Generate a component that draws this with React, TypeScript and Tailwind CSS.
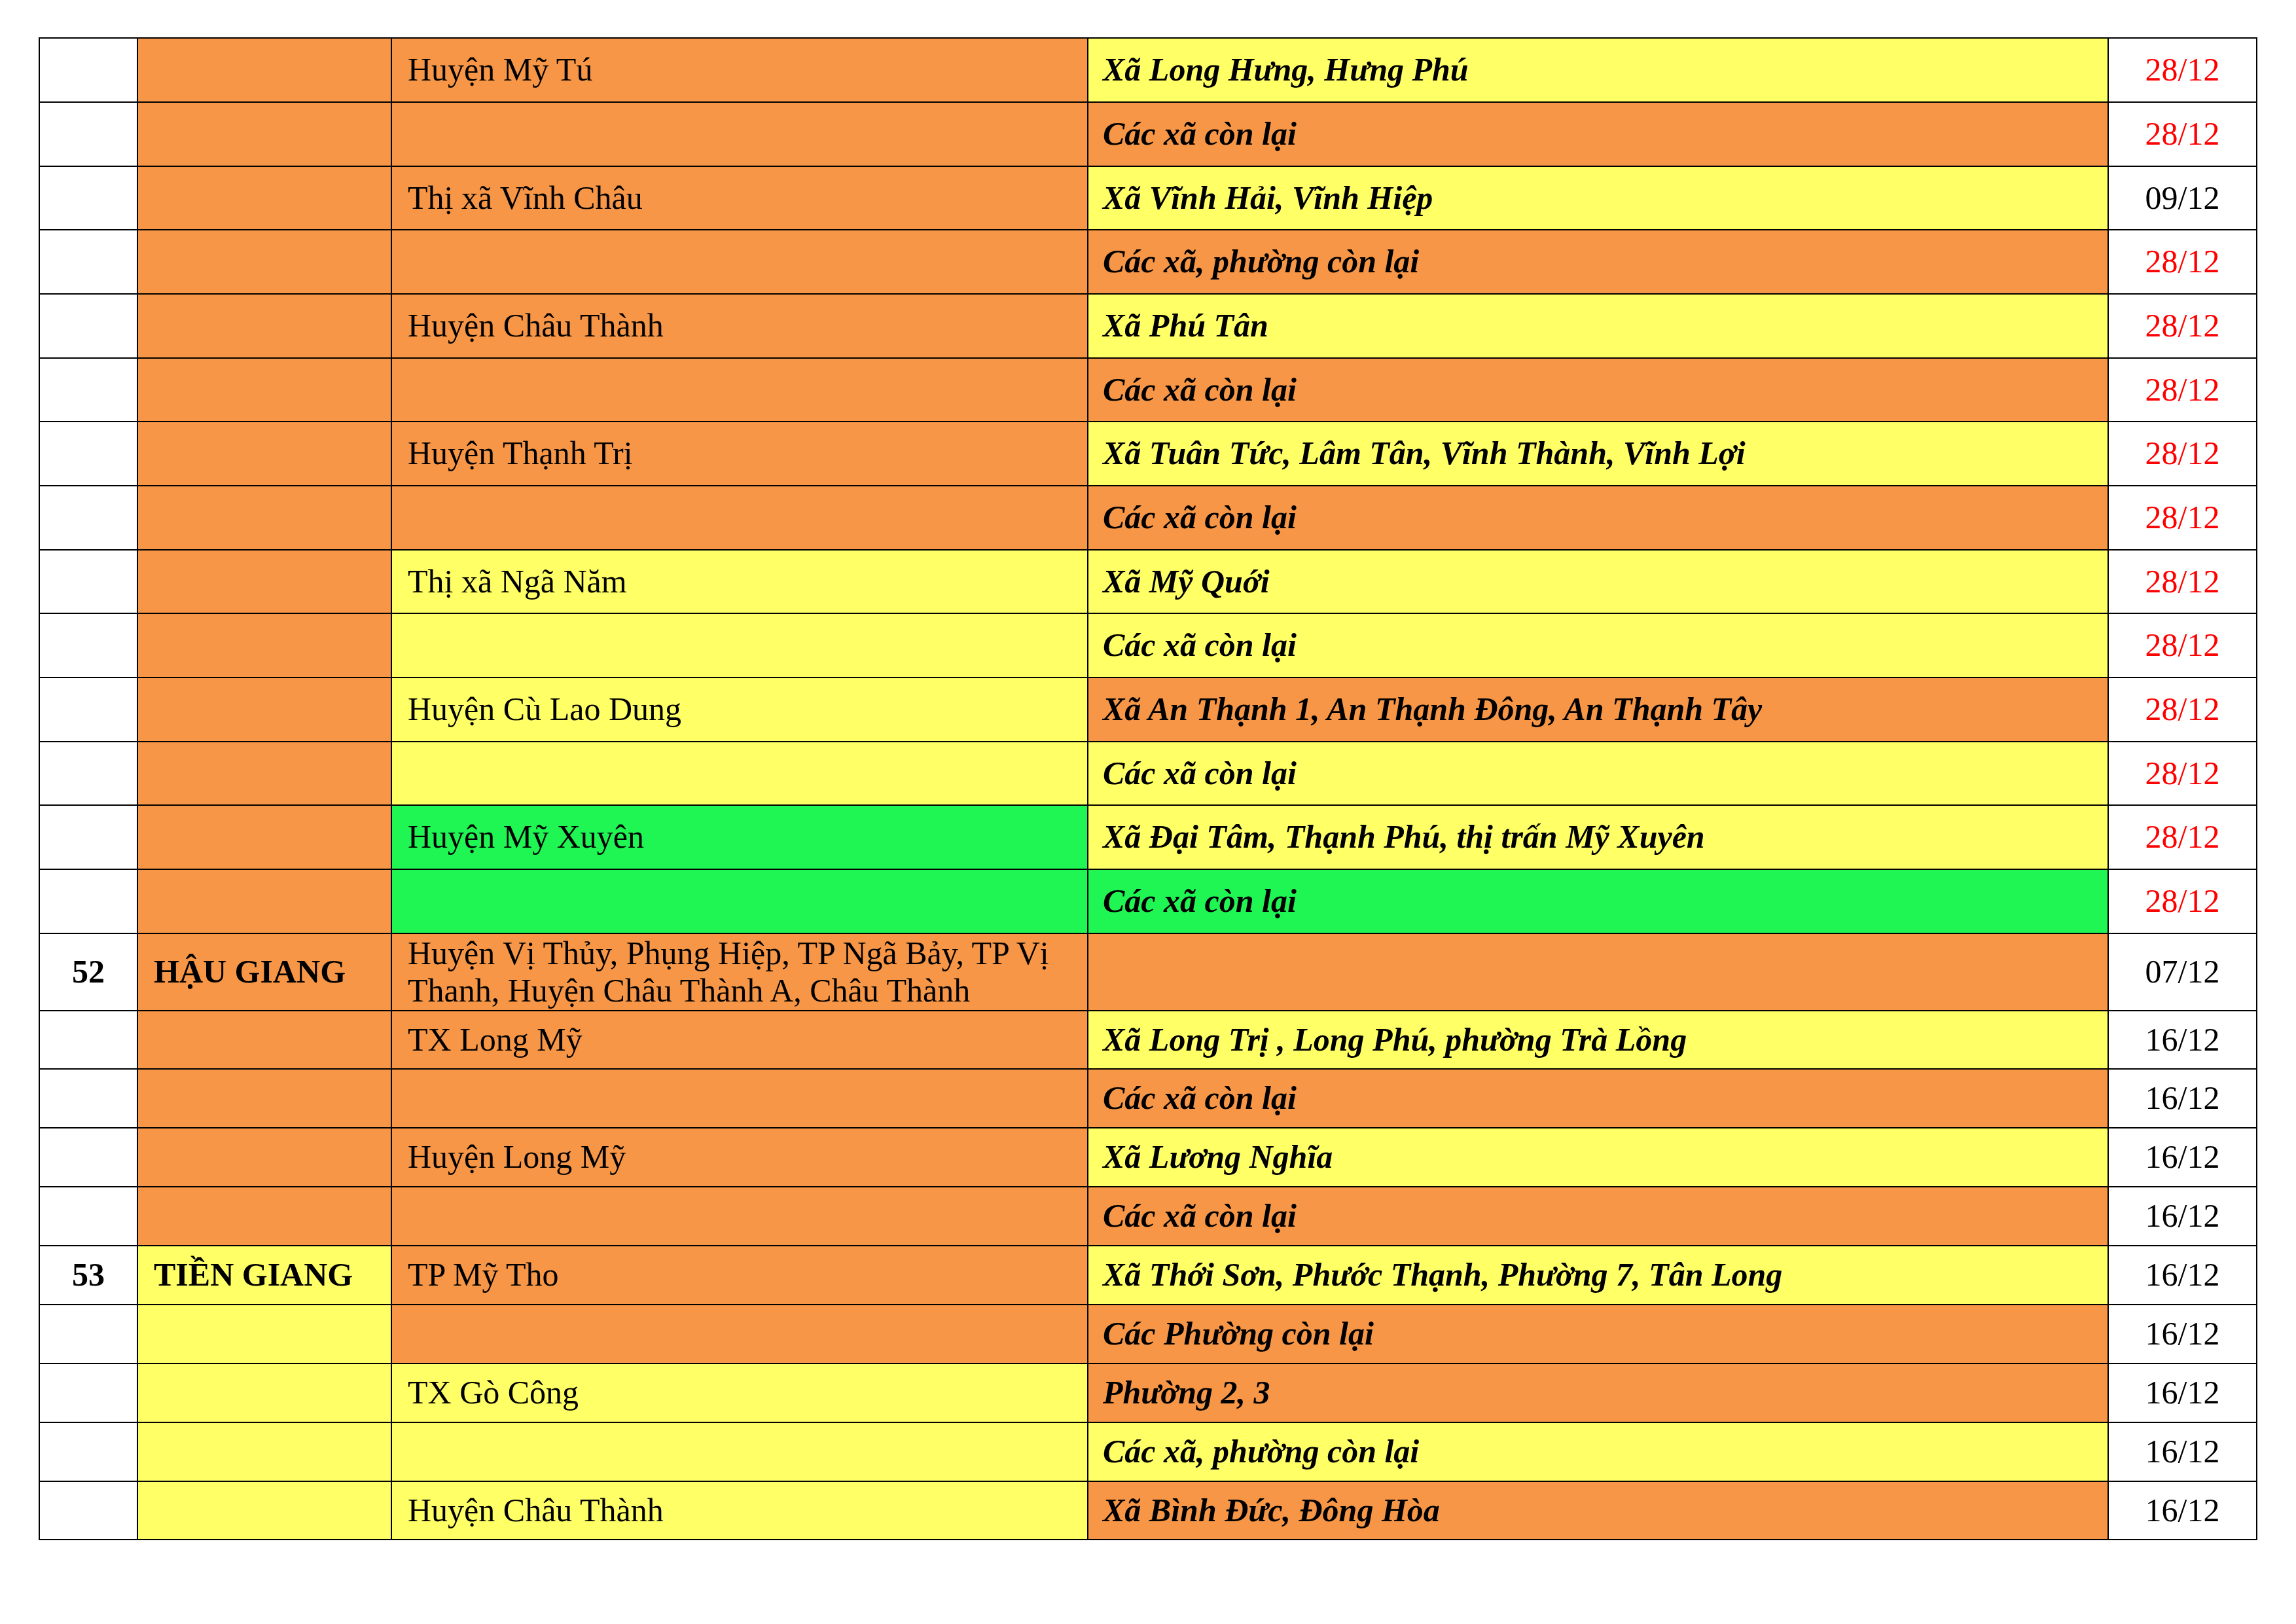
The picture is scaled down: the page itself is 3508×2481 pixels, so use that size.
import React from "react";

type C = "o" | "y" | "g";

const BG: Record<C, string> = {
  o: "bg-[#f79646]",
  y: "bg-[#ffff66]",
  g: "bg-[#1ff553]",
};

type Row = {
  h: string;
  num?: string;
  prov?: string;
  c2: C;
  c3: C;
  c4: C;
  dist?: React.ReactNode;
  comm?: string;
  date: string;
  red?: boolean;
};

const rows: Row[] = [
  { h: "h-[98px]", c2: "o", c3: "o", c4: "y", dist: "Huyện Mỹ Tú", comm: "Xã Long Hưng, Hưng Phú", date: "28/12", red: true },
  { h: "h-[98px]", c2: "o", c3: "o", c4: "o", comm: "Các xã còn lại", date: "28/12", red: true },
  { h: "h-[97px]", c2: "o", c3: "o", c4: "y", dist: "Thị xã Vĩnh Châu", comm: "Xã Vĩnh Hải, Vĩnh Hiệp", date: "09/12" },
  { h: "h-[98px]", c2: "o", c3: "o", c4: "o", comm: "Các xã, phường còn lại", date: "28/12", red: true },
  { h: "h-[98px]", c2: "o", c3: "o", c4: "y", dist: "Huyện Châu Thành", comm: "Xã Phú Tân", date: "28/12", red: true },
  { h: "h-[97px]", c2: "o", c3: "o", c4: "o", comm: "Các xã còn lại", date: "28/12", red: true },
  { h: "h-[98px]", c2: "o", c3: "o", c4: "y", dist: "Huyện Thạnh Trị", comm: "Xã Tuân Tức, Lâm Tân, Vĩnh Thành, Vĩnh Lợi", date: "28/12", red: true },
  { h: "h-[98px]", c2: "o", c3: "o", c4: "o", comm: "Các xã còn lại", date: "28/12", red: true },
  { h: "h-[97px]", c2: "o", c3: "y", c4: "y", dist: "Thị xã Ngã Năm", comm: "Xã Mỹ Quới", date: "28/12", red: true },
  { h: "h-[98px]", c2: "o", c3: "y", c4: "y", comm: "Các xã còn lại", date: "28/12", red: true },
  { h: "h-[98px]", c2: "o", c3: "y", c4: "o", dist: "Huyện Cù Lao Dung", comm: "Xã An Thạnh 1, An Thạnh Đông, An Thạnh Tây", date: "28/12", red: true },
  { h: "h-[97px]", c2: "o", c3: "y", c4: "y", comm: "Các xã còn lại", date: "28/12", red: true },
  { h: "h-[98px]", c2: "o", c3: "g", c4: "y", dist: "Huyện Mỹ Xuyên", comm: "Xã Đại Tâm, Thạnh Phú, thị trấn Mỹ Xuyên", date: "28/12", red: true },
  { h: "h-[98px]", c2: "o", c3: "g", c4: "g", comm: "Các xã còn lại", date: "28/12", red: true },
  {
    h: "h-[118px]",
    num: "52",
    prov: "HẬU GIANG",
    c2: "o",
    c3: "o",
    c4: "o",
    dist: (
      <>
        <span className="block whitespace-nowrap">Huyện Vị Thủy, Phụng Hiệp, TP Ngã Bảy, TP Vị</span>
        <span className="block whitespace-nowrap">Thanh, Huyện Châu Thành A, Châu Thành</span>
      </>
    ),
    date: "07/12",
  },
  { h: "h-[89px]", c2: "o", c3: "o", c4: "y", dist: "TX Long Mỹ", comm: "Xã Long Trị , Long Phú, phường Trà Lồng", date: "16/12" },
  { h: "h-[90px]", c2: "o", c3: "o", c4: "o", comm: "Các xã còn lại", date: "16/12" },
  { h: "h-[90px]", c2: "o", c3: "o", c4: "y", dist: "Huyện Long Mỹ", comm: "Xã Lương Nghĩa", date: "16/12" },
  { h: "h-[90px]", c2: "o", c3: "o", c4: "o", comm: "Các xã còn lại", date: "16/12" },
  { h: "h-[90px]", num: "53", prov: "TIỀN GIANG", c2: "y", c3: "o", c4: "y", dist: "TP Mỹ Tho", comm: "Xã Thới Sơn, Phước Thạnh, Phường 7, Tân Long", date: "16/12" },
  { h: "h-[90px]", c2: "y", c3: "o", c4: "o", comm: "Các Phường còn lại", date: "16/12" },
  { h: "h-[90px]", c2: "y", c3: "y", c4: "o", dist: "TX Gò Công", comm: "Phường 2, 3", date: "16/12" },
  { h: "h-[90px]", c2: "y", c3: "y", c4: "y", comm: "Các xã, phường còn lại", date: "16/12" },
  { h: "h-[89px]", c2: "y", c3: "y", c4: "o", dist: "Huyện Châu Thành", comm: "Xã Bình Đức, Đông Hòa", date: "16/12" },
];

export default function App() {
  return (
    <div className="min-h-[2481px] w-[3508px] bg-white pt-[57px] pl-[59px] font-['Liberation_Serif','Times_New_Roman',serif] text-[50px] leading-[1.15] text-black">
      <div className="w-[3390px] border-l-2 border-t-2 border-black">
        {rows.map((r, i) => (
          <div key={i} className={`grid grid-cols-[150px_388px_1064px_1559px_227px] ${r.h}`}>
            <div className="flex items-center justify-center border-r-2 border-b-2 border-black bg-white font-bold">
              {r.num}
            </div>
            <div className={`flex items-center border-r-2 border-b-2 border-black pl-[24px] font-bold whitespace-nowrap ${BG[r.c2]}`}>
              {r.prov}
            </div>
            <div className={`flex flex-col justify-center border-r-2 border-b-2 border-black pl-[24px] ${BG[r.c3]}`}>
              <div>{r.dist}</div>
            </div>
            <div className={`flex items-center border-r-2 border-b-2 border-black pl-[22px] font-bold italic whitespace-nowrap ${BG[r.c4]}`}>
              {r.comm}
            </div>
            <div className={`flex items-center justify-center border-r-2 border-b-2 border-black bg-white ${r.red ? "text-[#ff0000]" : "text-black"}`}>
              {r.date}
            </div>
          </div>
        ))}
      </div>
    </div>
  );
}
